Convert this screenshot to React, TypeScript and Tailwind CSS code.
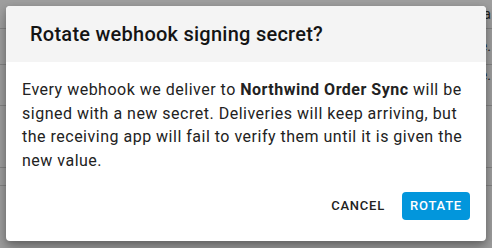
import React from "react";

const font = { fontFamily: "Roboto, 'Liberation Sans', sans-serif" };

export default function App() {
  return (
    <div className="relative w-[492px] h-[248px] overflow-hidden bg-white" style={font}>
      {/* background page */}
      <div className="flex flex-col text-[14px] text-[#333]">
        <div className="h-[29px] border-b border-[#d6d6d6] flex items-center justify-end pr-[1px]">Metadata</div>
        <div className="h-[36px] border-b border-[#d6d6d6] flex items-center justify-end pr-[1px]">Active since june.</div>
        <div className="h-[41px] border-b border-[#d6d6d6] flex items-start justify-end pr-[1px]">Awaiting update.</div>
        <div className="h-[62px] border-b border-[#d6d6d6]"></div>
        <div className="h-[18px] border-b border-[#d6d6d6]"></div>
      </div>
      {/* backdrop */}
      <div className="absolute inset-0 bg-black/[0.38]"></div>
      {/* dialog */}
      <div className="absolute left-[6px] top-[6px] w-[480px] h-[235px] bg-white rounded-[4px] overflow-hidden shadow-[0_8px_14px_rgba(0,0,0,0.25),0_2px_6px_rgba(0,0,0,0.2)] flex flex-col">
        <div className="h-[56px] bg-[#f4f4f4] flex items-center pl-[24px]">
          <h2 className="text-[20px] font-medium text-[#141414] leading-none tracking-[0.25px]">Rotate webhook signing secret?</h2>
        </div>
        <div className="px-[16px] pt-[16px] pb-[20px]">
          <p className="text-[16px] leading-[23.5px] text-[#222] tracking-[0.5px]">
            Every webhook we deliver to <span className="font-bold">Northwind Order Sync</span> will be signed with a new secret. Deliveries will keep arriving, but the receiving app will fail to verify them until it is given the new value.
          </p>
        </div>
        <div className="flex justify-end items-center gap-[9px] pr-[16px]">
          <button className="h-[28px] px-[8px] text-[13px] font-medium tracking-[0.06em] text-[#222] uppercase">Cancel</button>
          <button className="h-[28px] px-[8px] text-[13px] font-medium tracking-[0.06em] text-white bg-[#0296dc] rounded-[4px] uppercase">Rotate</button>
        </div>
      </div>
    </div>
  );
}
